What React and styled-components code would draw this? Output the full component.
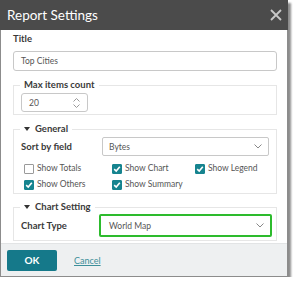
import React from 'react';
import styled, { createGlobalStyle } from 'styled-components';

const Global = createGlobalStyle`
  body {
    margin: 0;
    background: #fff;
    font-family: Lato, "Open Sans", "Liberation Sans", sans-serif;
  }
`;

const Dialog = styled.div`
  width: 286px;
  border: 1px solid #8c8c8c;
  border-top: none;
  background: #fff;
  box-shadow: 3px 3px 2px rgba(0, 0, 0, 0.45);
`;

const Header = styled.div`
  height: 30px;
  background: #4b4b4b;
  display: flex;
  align-items: center;
  justify-content: space-between;
  padding: 0 6px 0 7px;
  margin: 0 -1px;
`;

const HeaderTitle = styled.div`
  color: #fff;
  font-size: 13.5px;
`;

const Body = styled.div`
  padding: 2px 10px 2px 12px;
`;

const Label = styled.div`
  width: ${p => (p.$w ? `${p.$w}px` : 'auto')};
  flex: none;
  font-size: 9.5px;
  font-weight: 700;
  color: #3a3a3a;
  line-height: 14px;
  white-space: nowrap;
`;

const TextInput = styled.div`
  height: 18px;
  margin-top: ${p => p.$mt || 0}px;
  border: 1px solid #c8c8c8;
  border-radius: 3px;
  display: flex;
  align-items: center;
  padding: 0 7px;
  font-size: 8.5px;
  color: #555;
`;

const Fieldset = styled.fieldset`
  margin: ${p => p.$mt}px 0 0;
  border: 1px solid #e6e6e6;
  padding: ${p => p.$pad};
  min-width: 0;
`;

const Legend = styled.legend`
  font-size: 9.5px;
  font-weight: 700;
  color: #3a3a3a;
  line-height: 14px;
  padding: 0 4px;
  margin-left: 6px;
  display: flex;
  align-items: center;
  gap: 5px;
`;

const Tri = styled.span`
  width: 0;
  height: 0;
  border-left: 3px solid transparent;
  border-right: 3px solid transparent;
  border-top: 4px solid #333;
`;

const NumberInput = styled(TextInput)`
  width: 51px;
  height: 17px;
  justify-content: space-between;
  padding: 0 7px 0 7px;
  margin-left: 7px;
`;

const Row = styled.div`
  display: flex;
  align-items: center;
  padding-left: 7px;
`;

const SelectBox = styled.div`
  flex: 1;
  height: ${p => p.$h}px;
  margin-right: ${p => p.$mr}px;
  border: ${p => (p.$hl ? '2px solid #2dbb2d' : '1px solid #c8c8c8')};
  border-radius: 2px;
  display: flex;
  align-items: center;
  justify-content: space-between;
  padding: 0 6px 0 ${p => p.$pl}px;
  font-size: 8.5px;
  color: #555;
`;

const CheckGrid = styled.div`
  display: grid;
  grid-template-columns: 88px 83px 1fr;
  row-gap: 5px;
  padding: 7px 0 0 10px;
`;

const CheckItem = styled.div`
  display: flex;
  align-items: center;
  gap: 3px;
  font-size: 8.5px;
  color: #555;
  line-height: 11px;
  white-space: nowrap;
`;

const Box = styled.span`
  width: 10px;
  height: 10px;
  box-sizing: border-box;
  border-radius: 1px;
  border: 1px solid ${p => (p.$on ? '#16848f' : '#9a9a9a')};
  background: ${p => (p.$on ? '#16848f' : '#fff')};
  display: flex;
  align-items: center;
  justify-content: center;
`;

const Footer = styled.div`
  height: 32px;
  background: #eef0f1;
  border-top: 1px solid #e2e4e5;
  display: flex;
  align-items: center;
  padding: 0 6px;
  gap: 17px;
`;

const OkButton = styled.button`
  width: 50px;
  height: 21px;
  border: none;
  border-radius: 2px;
  background: #15798a;
  color: #fff;
  font-family: inherit;
  font-size: 10px;
  font-weight: 700;
  padding: 0;
`;

const CancelLink = styled.a`
  font-size: 9px;
  color: #3d8f9a;
  text-decoration: underline;
`;

const Chevron = () => (
  <svg width="8" height="5" viewBox="0 0 8 5">
    <path d="M0.5 0.5 L4 4 L7.5 0.5" fill="none" stroke="#888" strokeWidth="1" />
  </svg>
);

const Spinner = () => (
  <svg width="7" height="12" viewBox="0 0 7 12">
    <path d="M0.5 4.5 L3.5 1.5 L6.5 4.5" fill="none" stroke="#999" strokeWidth="1" />
    <path d="M0.5 7.5 L3.5 10.5 L6.5 7.5" fill="none" stroke="#999" strokeWidth="1" />
  </svg>
);

const Check = ({ on, children }) => (
  <CheckItem>
    <Box $on={on}>
      {on && (
        <svg width="8" height="8" viewBox="0 0 8 8">
          <path d="M1.2 4.2 L3.2 6 L6.8 1.8" fill="none" stroke="#fff" strokeWidth="1.6" />
        </svg>
      )}
    </Box>
    {children}
  </CheckItem>
);

const App = () => (
  <>
    <Global />
    <Dialog>
      <Header>
        <HeaderTitle>Report Settings</HeaderTitle>
        <svg width="12" height="12" viewBox="0 0 12 12">
          <path d="M1 1 L11 11 M11 1 L1 11" stroke="#c8c8c8" strokeWidth="1.8" />
        </svg>
      </Header>
      <Body>
        <Label>Title</Label>
        <TextInput $mt={5}>Top Cities</TextInput>
        <Fieldset $mt={7} $pad="1px 0 2px 0">
          <Legend>Max items count</Legend>
          <NumberInput>
            20
            <Spinner />
          </NumberInput>
        </Fieldset>
        <Fieldset $mt={7} $pad="1px 0 3px 0">
          <Legend>
            <Tri />
            General
          </Legend>
          <Row>
            <Label $w={81}>Sort by field</Label>
            <SelectBox $h={17} $mr={7} $pl={6}>
              Bytes
              <Chevron />
            </SelectBox>
          </Row>
          <CheckGrid>
            <Check>Show Totals</Check>
            <Check on>Show Chart</Check>
            <Check on>Show Legend</Check>
            <Check on>Show Others</Check>
            <Check on>Show Summary</Check>
          </CheckGrid>
        </Fieldset>
        <Fieldset $mt={6} $pad="0 0 3px 0">
          <Legend>
            <Tri />
            Chart Setting
          </Legend>
          <Row>
            <Label $w={78}>Chart Type</Label>
            <SelectBox $hl $h={19} $mr={4} $pl={8}>
              World Map
              <Chevron />
            </SelectBox>
          </Row>
        </Fieldset>
      </Body>
      <Footer>
        <OkButton>OK</OkButton>
        <CancelLink>Cancel</CancelLink>
      </Footer>
    </Dialog>
  </>
);

export default App;
